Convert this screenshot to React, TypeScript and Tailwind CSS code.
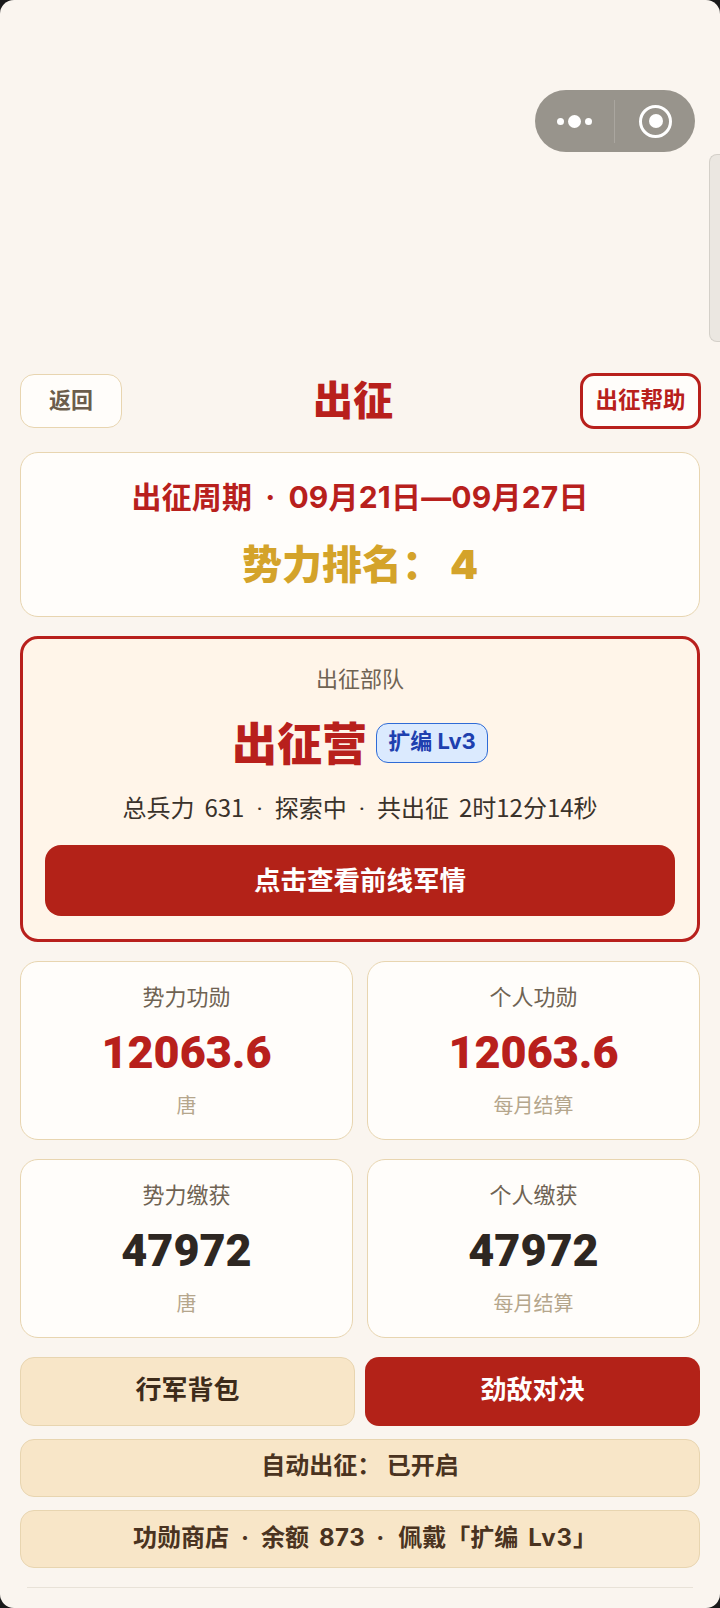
import React from 'react';

const cjk = { fontFamily: '"Noto Sans CJK SC", "Noto Sans", sans-serif' };
const mixed = { fontFamily: 'Inter, "Noto Sans CJK SC", sans-serif' };

const StatCard = ({ label, value, sub, red }: { label: string; value: string; sub: string; red?: boolean }) => (
  <div className="flex h-[179px] flex-col items-center rounded-[18px] border border-[#e8d5b0] bg-[#fffdfa]">
    <div className="mt-[17px] text-[22px] leading-[32px] text-[#6f6353]">{label}</div>
    <div className={`mt-[12px] font-['Roboto'] text-[45px] leading-[60px] font-black ${red ? 'text-[#b8201c]' : 'text-[#2e2722]'}`}>{value}</div>
    <div className="mt-[7px] text-[20px] leading-[30px] text-[#b5a68c]">{sub}</div>
  </div>
);

export default function App() {
  return (
    <div style={cjk} className="relative h-[1608px] w-[720px] overflow-hidden bg-[#1a1a1a]">
      <div className="relative flex h-full flex-col rounded-[14px] bg-[#faf5ef] px-[20px] pt-[373px]">
        {/* wechat capsule */}
        <div className="absolute top-[90px] left-[535px] flex h-[62px] w-[160px] items-center rounded-full bg-[#98948c]">
          <div className="flex w-[79px] items-center justify-center gap-[4px]">
            <span className="h-[7px] w-[7px] rounded-full bg-white" />
            <span className="h-[13px] w-[13px] rounded-full bg-white" />
            <span className="h-[7px] w-[7px] rounded-full bg-white" />
          </div>
          <div className="h-[43px] w-px bg-[#aaa69f]" />
          <div className="ml-[24px] flex h-[33px] w-[33px] items-center justify-center rounded-full border-[3px] border-white">
            <span className="h-[14px] w-[14px] rounded-full bg-white" />
          </div>
        </div>
        <div className="absolute top-[154px] right-0 h-[188px] w-[11px] rounded-l-[8px] border border-r-0 border-[#d4d0c9] bg-[#ebe7e1]" />

        <div className="flex h-[56px] items-center justify-between">
          <button className="h-[54px] w-[102px] rounded-[14px] border border-[#e8d5b0] bg-[#fffdfa] pb-[5px] text-[22px] font-bold text-[#6b5d4c]">返回</button>
          <div className="ml-[4px] pb-[6px] text-[40px] leading-none font-black text-[#b8201c]">出征</div>
          <button className="-mr-px h-[56px] w-[121px] rounded-[14px] border-[3px] border-[#b8201c] bg-[#fffdfa] pb-[4px] text-[22.5px] font-bold text-[#b8201c]">出征帮助</button>
        </div>

        <div className="mt-[23px] flex h-[165px] flex-col items-center rounded-[18px] border border-[#e8d5b0] bg-[#fffdfa]">
          <div style={mixed} className="mt-[22px] text-[30px] leading-[44px] font-bold tracking-[0.2px] text-[#b8201c]">
            出征周期<span className="mx-[13px]">·</span>09月21日—09月27日
          </div>
          <div style={mixed} className="mt-[18px] text-[40px] leading-[56px] font-black text-[#d4a32a]">势力排名： 4</div>
        </div>

        <div className="mt-[19px] flex h-[306px] flex-col items-center rounded-[18px] border-[3px] border-[#b8201c] bg-[#fff5e9] px-[22px]">
          <div className="mt-[22px] text-[22px] leading-[32px] text-[#6f6353]">出征部队</div>
          <div className="mt-[20px] flex h-[60px] items-center gap-[9px]">
            <span className="pb-[4px] text-[45px] leading-none font-black text-[#b8201c]">出征营</span>
            <span style={mixed} className="flex h-[40px] w-[112px] items-center justify-center rounded-[12px] border border-[#2f6bd6] bg-[#dbeafe] pb-[3px] text-[22px] font-bold text-[#1e40af]">扩编 Lv3</span>
          </div>
          <div className="mt-[17px] text-[24px] leading-[34px] text-[#3a322b]">
            总兵力<span className="ml-[10px]">631</span><span className="mx-[12px] font-['Roboto']">·</span>探索中<span className="mx-[12px] font-['Roboto']">·</span>共出征<span className="ml-[10px]">2时12分14秒</span>
          </div>
          <button className="mt-[19px] h-[71px] w-full rounded-[16px] bg-[#b32218] pb-[4px] text-[26.5px] font-bold text-white">点击查看前线军情</button>
        </div>

        <div className="mt-[19px] grid grid-cols-2 gap-x-[14px] gap-y-[19px]">
          <StatCard label="势力功勋" value="12063.6" sub="唐" red />
          <StatCard label="个人功勋" value="12063.6" sub="每月结算" red />
          <StatCard label="势力缴获" value="47972" sub="唐" />
          <StatCard label="个人缴获" value="47972" sub="每月结算" />
        </div>

        <div className="mt-[19px] flex gap-[10px]">
          <button className="h-[69px] w-[335px] rounded-[14px] border border-[#e8d5b0] bg-[#f8e6c8] pb-[8px] text-[26px] font-bold text-[#3d2b1a]">行军背包</button>
          <button className="h-[69px] flex-1 rounded-[14px] bg-[#b32218] pb-[8px] text-[26px] font-bold text-white">劲敌对决</button>
        </div>
        <button style={mixed} className="mt-[13px] h-[58px] w-full rounded-[14px] border border-[#e8d5b0] bg-[#f8e6c8] pb-[4px] text-[24px] font-bold text-[#4a3320]">自动出征： 已开启</button>
        <button style={mixed} className="mt-[13px] h-[58px] w-full rounded-[14px] border border-[#e8d5b0] bg-[#f8e6c8] pb-[2px] pl-[10px] text-[24px] font-bold text-[#4a3320]">
          功勋商店<span className="mx-[12px]">·</span>余额<span className="ml-[10px] tracking-[0.5px]">873</span><span className="mr-[14px] ml-[11px]">·</span>佩戴「扩编<span className="ml-[10px] tracking-[1px]">Lv3</span>」
        </button>
        <div className="mx-[7px] mt-[19px] h-px bg-[#e8e2d8]" />
      </div>
    </div>
  );
}
